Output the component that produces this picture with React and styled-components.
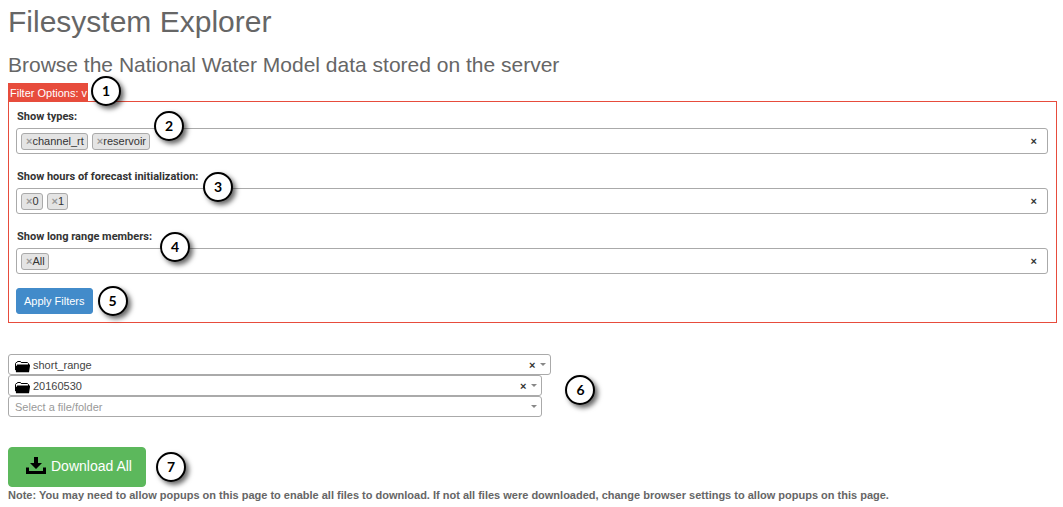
import React from 'react';
import styled, { createGlobalStyle } from 'styled-components';

const GlobalStyle = createGlobalStyle`
  * { box-sizing: border-box; }
  body {
    margin: 0;
    background: #fff;
    color: #666;
    font: 11px/16px "Liberation Sans", Arial, sans-serif;
  }
  button, input, select { font: inherit; }
`;

const Page = styled.main`
  padding: 0 6px 0 8px;
`;

const Title = styled.h1`
  margin: 0;
  padding-top: 4px;
  font-size: 30px;
  line-height: 36px;
  font-weight: 400;
`;

const Subtitle = styled.h2`
  margin: 12px 0 0;
  font-size: 21px;
  line-height: 26px;
  font-weight: 400;
`;

const TabRow = styled.div`
  position: relative;
  display: flex;
  margin-top: 5px;
`;

const FilterTab = styled.button`
  height: 18px;
  padding: 2px 1px 0 2px;
  border: 0;
  background: #e74c3c;
  color: #fff;
  line-height: 16px;
`;

const FilterPanel = styled.section`
  padding: 6px 8px 6px 7px;
  border: 1px solid #e74c3c;
`;

const Fields = styled.div`
  display: grid;
  gap: 14px;
  margin-bottom: 12px;
`;

const Field = styled.div`
  position: relative;
`;

const FieldLabel = styled.label`
  display: block;
  height: 18px;
  margin: 0 0 0 1px;
  padding-top: 1px;
  color: #333;
  font-family: Roboto, sans-serif;
  font-weight: 700;
  line-height: 16px;
`;

const TagBox = styled.div`
  display: flex;
  align-items: center;
  gap: 4px;
  height: 26px;
  margin-top: 2px;
  padding: 0 10px 0 4px;
  border: 1px solid #aaa;
  border-radius: 3px;
`;

const Tag = styled.span`
  display: flex;
  align-items: center;
  height: 17px;
  padding: 0 3px 0 4px;
  border: 1px solid #aaa;
  border-radius: 3px;
  background: #e4e4e4;
  color: #333;
`;

const TagRemove = styled.button`
  padding: 0;
  border: 0;
  background: none;
  color: #999;
  font-weight: 700;
  line-height: 14px;
`;

const TagInput = styled.input`
  flex: 1;
  min-width: 0;
  border: 0;
  outline: 0;
  background: none;
`;

const ClearButton = styled.button`
  padding: 0;
  border: 0;
  background: none;
  color: #333;
  font-weight: 700;
  line-height: 16px;
`;

const ActionRow = styled.div`
  display: flex;
  align-items: center;
  gap: ${(p) => p.$gap}px;
`;

const ApplyButton = styled.button`
  height: 26px;
  padding: 0 7px;
  border: 1px solid #428bca;
  border-radius: 3px;
  background: #428bca;
  color: #fff;
`;

const Browser = styled.div`
  display: flex;
  align-items: flex-start;
  gap: 14px;
  margin-top: 31px;
`;

const Levels = styled.div`
  display: flex;
  flex-direction: column;
  width: calc(52% - 2px);
`;

const Level = styled.div`
  position: relative;
  display: flex;
  align-items: center;
  height: 21px;
  margin-right: ${(p) => (p.$inset ? 9 : 0)}px;
  color: #444;
`;

const LevelSelect = styled.select`
  width: 100%;
  height: 21px;
  padding: 0 20px 0 ${(p) => (p.$icon ? 24 : 6)}px;
  border: 1px solid #aaa;
  border-radius: 3px;
  background: #fff;
  color: ${(p) => (p.$icon ? '#444' : '#999')};
  appearance: none;
`;

const FolderSlot = styled.span`
  position: absolute;
  left: 7px;
  top: 7px;
  display: flex;
  pointer-events: none;
`;

const LevelClear = styled(ClearButton)`
  position: absolute;
  right: 16px;
`;

const Arrow = styled.span`
  position: absolute;
  right: 5px;
  border: 3px solid transparent;
  border-top-color: #888;
  border-bottom: 0;
  pointer-events: none;
`;

const DownloadRow = styled(ActionRow)`
  margin-top: 30px;
`;

const DownloadButton = styled.button`
  display: flex;
  align-items: center;
  gap: 4px;
  height: 40px;
  padding: 0 13px 2px 16px;
  border: 1px solid #5cb85c;
  border-radius: 4px;
  background: #5cb85c;
  color: #fff;
  font-size: 14px;
`;

const Note = styled.p`
  margin: 0;
  font-weight: 700;
`;

const Marker = styled.span`
  display: flex;
  flex: none;
  align-items: center;
  justify-content: center;
  width: 30px;
  height: 30px;
  border: 2px solid #000;
  border-radius: 50%;
  background: #fff;
  box-shadow: 3px 3px 5px rgba(0, 0, 0, 0.6);
  color: #000;
  font: 700 14px/18px Lato, sans-serif;
`;

const BrowserMarker = styled(Marker)`
  margin-top: 21px;
`;

const FloatingMarker = styled(Marker)`
  position: absolute;
  z-index: 1;
  left: ${(p) => p.$left}px;
  top: ${(p) => p.$top}px;
`;

function FolderIcon() {
  return (
    <svg width="15" height="12" viewBox="0 0 15 12" aria-hidden="true">
      <path d="M.5 9V2.3L1.2 1.5h.8l.5-1h3l.6 1h6.3l1.1 1v1.5" fill="none" stroke="#000" />
      <path d="M2 3.5h13V5l-1 6.3H1L.2 5h1.3z" fill="#000" />
    </svg>
  );
}

function DownloadIcon() {
  return (
    <svg width="22" height="18" viewBox="0 0 22 18" aria-hidden="true">
      <path d="M9 0h4v6h4l-6 6-6-6h4z" fill="#000" />
      <path d="M1 10.5h3v3.5h14v-3.5h3V17H1z" fill="#000" />
    </svg>
  );
}

const fields = [
  { id: 'types', label: 'Show types:', tags: ['channel_rt', 'reservoir'], marker: 2, left: 138, top: 3 },
  { id: 'hours', label: 'Show hours of forecast initialization:', tags: ['0', '1'], marker: 3, left: 187, top: 4 },
  { id: 'members', label: 'Show long range members:', tags: ['All'], marker: 4, left: 144, top: 4 },
];

const levels = [
  { label: 'Model range', value: 'short_range', folder: true },
  { label: 'Date', value: '20160530', folder: true, inset: true },
  { label: 'File or folder', value: 'Select a file/folder', inset: true },
];

export default function App() {
  return (
    <Page>
      <GlobalStyle />
      <Title>Filesystem Explorer</Title>
      <Subtitle>Browse the National Water Model data stored on the server</Subtitle>
      <TabRow>
        <FilterTab type="button">Filter Options: v</FilterTab>
        <FloatingMarker $left={83} $top={-7}>1</FloatingMarker>
      </TabRow>
      <FilterPanel>
        <Fields>
          {fields.map((f) => (
            <Field key={f.id}>
              <FieldLabel htmlFor={f.id}>{f.label}</FieldLabel>
              <TagBox>
                {f.tags.map((tag) => (
                  <Tag key={tag}>
                    <TagRemove type="button" aria-label={`Remove ${tag}`}>×</TagRemove>
                    {tag}
                  </Tag>
                ))}
                <TagInput id={f.id} />
                <ClearButton type="button" aria-label="Clear">×</ClearButton>
              </TagBox>
              <FloatingMarker $left={f.left} $top={f.top}>{f.marker}</FloatingMarker>
            </Field>
          ))}
        </Fields>
        <ActionRow $gap={5}>
          <ApplyButton type="button">Apply Filters</ApplyButton>
          <Marker>5</Marker>
        </ActionRow>
      </FilterPanel>
      <Browser>
        <Levels>
          {levels.map((l) => (
            <Level key={l.label} $inset={l.inset}>
              <LevelSelect aria-label={l.label} $icon={l.folder}>
                <option>{l.value}</option>
              </LevelSelect>
              {l.folder && <FolderSlot><FolderIcon /></FolderSlot>}
              {l.folder && <LevelClear type="button" aria-label="Clear">×</LevelClear>}
              <Arrow />
            </Level>
          ))}
        </Levels>
        <BrowserMarker>6</BrowserMarker>
      </Browser>
      <DownloadRow $gap={10}>
        <DownloadButton type="button">
          <DownloadIcon />
          Download All
        </DownloadButton>
        <Marker>7</Marker>
      </DownloadRow>
      <Note>
        Note: You may need to allow popups on this page to enable all files to download. If not all
        files were downloaded, change browser settings to allow popups on this page.
      </Note>
    </Page>
  );
}
